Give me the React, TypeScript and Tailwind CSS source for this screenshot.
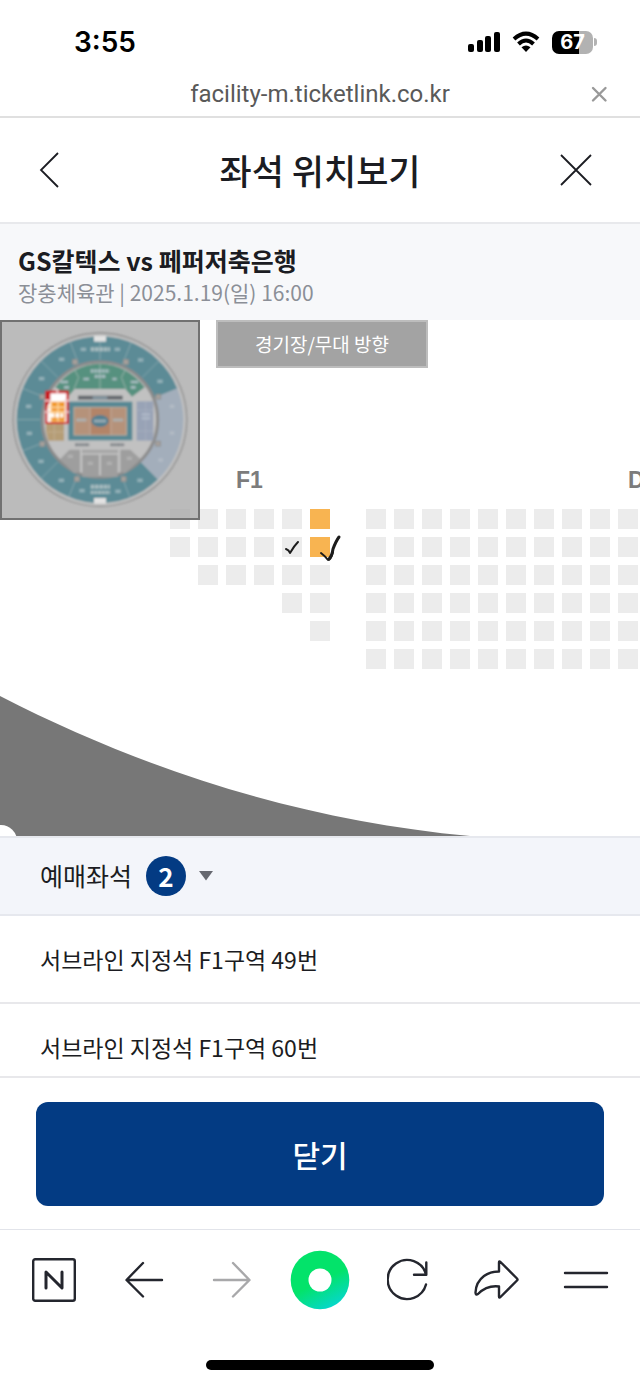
import React from "react";

const INK = "#24262e";

const polar = (r: number, deg: number): [number, number] => {
  const a = (deg * Math.PI) / 180;
  return [300 + r * Math.cos(a), 305 + r * Math.sin(a)];
};

const sector = (r0: number, r1: number, from: number, to: number) => {
  const [ax, ay] = polar(r1, from);
  const [bx, by] = polar(r1, to);
  const [cx, cy] = polar(r0, to);
  const [dx, dy] = polar(r0, from);
  const large = to - from > 180 ? 1 : 0;
  return `M${ax} ${ay}A${r1} ${r1} 0 ${large} 1 ${bx} ${by}L${cx} ${cy}A${r0} ${r0} 0 ${large} 0 ${dx} ${dy}Z`;
};

const spokes = [-111, -135, -158, 180, 158, 135, 112, 69, -90, -68, -45];
const blockMarks = [
  [185, 124], [125, 182], [86, 265], [88, 346], [123, 430], [184, 487],
  [420, 487], [422, 126], [480, 190], [250, 94], [352, 94], [246, 518],
  [354, 520],
];

function MiniMap() {
  return (
    <svg viewBox="6 12 588 588" className="block size-full" role="img" aria-label="경기장 전체 배치도">
      <defs>
        <filter id="soft" x="-5%" y="-5%" width="110%" height="110%">
          <feGaussianBlur stdDeviation="2.5" />
        </filter>
      </defs>
      <g filter="url(#soft)">
        <circle cx="300" cy="305" r="260" fill="#c0c0c0" stroke="#8d8d8d" strokeWidth="4" />
        <path d={sector(172, 250, 46, 338)} fill="#5c8b96" />
        <path d={sector(176, 250, -22, 46)} fill="#a3aebb" />
        <circle cx="300" cy="305" r="173" fill="#c1c1c1" stroke="#8b8b8b" strokeWidth="9" />
        <g stroke="#86a5ad" strokeWidth="3">
          {spokes.map((a) => {
            const [x1, y1] = polar(180, a);
            const [x2, y2] = polar(250, a);
            return <line key={a} x1={x1} y1={y1} x2={x2} y2={y2} />;
          })}
        </g>
        <path d="M166 208Q216 140 300 137Q384 140 434 208L396 236L376 213H224L204 236Z" fill="#57917f" />
        <path d="M222 152L236 178L222 213M378 152L364 178L378 213M300 137V213" stroke="#95b3a9" strokeWidth="3" fill="none" />
        <rect x="282" y="54" width="36" height="17" fill="#e2e2e2" />
        <rect x="282" y="540" width="36" height="17" fill="#e2e2e2" />
        {[[225, 132], [378, 132], [127, 236], [475, 236], [127, 378], [474, 377], [231, 483], [371, 483]].map(([x, y]) => (
          <rect key={`${x}-${y}`} x={x - 7} y={y - 7} width="14" height="14" fill="#a8a29c" stroke="#8f8f8f" strokeWidth="3" />
        ))}
        <rect x="234" y="233" width="134" height="12" fill="#63686d" />
        <rect x="278" y="235" width="44" height="9" fill="#8598a3" />
        <rect x="205" y="251" width="192" height="116" fill="#568894" />
        <rect x="222" y="268" width="157" height="83" fill="#b5927a" stroke="#bfae9f" strokeWidth="3" />
        <rect x="272" y="270" width="59" height="79" fill="#b38467" />
        <path d="M270 268V351M333 268V351" stroke="#bfa898" strokeWidth="3" />
        <ellipse cx="300" cy="309" rx="26" ry="18" fill="#527f91" />
        <path d="M283 309H318M230 306H260M340 306H370" stroke="#aab7bc" strokeWidth="9" strokeDasharray="7 2" />
        <rect x="410" y="250" width="50" height="118" fill="#98a3b6" />
        <path d="M437 250V368M410 276H460M410 339H460" stroke="#a5adbd" strokeWidth="3" />
        <path d="M425 289H450M425 301H450" stroke="#b0bac9" strokeWidth="7" />
        <path d="M160 316H192V368H145L138 340V316Z" fill="#b59d76" />
        <path d="M142 342H192M163 316V368" stroke="#c0ae8e" strokeWidth="3" />
        <path d="M225 380H268M331 380H373" stroke="#82868a" strokeWidth="9" strokeDasharray="9 1" />
        <path d="M180 424L208 395H240V462L222 466ZM247 410H297V477H247ZM303 410H353V477H303ZM361 395H391L422 424L376 466L361 462Z" fill="#9e9e9e" />
        <path d="M246 400H354" stroke="#a5a5a5" strokeWidth="10" />
        <g stroke="#a7bcc0" fill="none">
          <path d="M272 94H330M272 506H330" strokeWidth="12" strokeDasharray="11 2" />
          <path d="M272 523H330M272 159H328M284 175H318" strokeWidth="10" strokeDasharray="9 2" />
          <path d="M181 192H204M192 208H207M392 192H415M392 208H407M250 183H267M337 183H350" strokeWidth="8" />
        </g>
        {blockMarks.map(([x, y]) => (
          <rect key={`${x}-${y}`} x={x - 8} y={y - 5} width="16" height="10" fill="#93b0b8" />
        ))}
        {[[482, 426], [516, 265], [516, 345]].map(([x, y]) => (
          <rect key={`${x}-${y}`} x={x - 7} y={y - 5} width="14" height="10" fill="#b2bbc5" />
        ))}
        {[[211, 415], [271, 436], [328, 436], [388, 421]].map(([x, y]) => (
          <rect key={`${x}-${y}`} x={x - 8} y={y - 5} width="16" height="10" fill="#b0b0b0" />
        ))}
        <rect x="137" y="219" width="68" height="98" fill="#c4141c" />
        <path d="M151 226H200V314H141V268L151 248Z" fill="#fff" />
        <rect x="153" y="251" width="42" height="60" fill="#f19a2c" />
        <path d="M140 268H202M140 282H202M153 251V311M174 251V311" stroke="#ffd9a3" strokeWidth="4" />
        <path d="M151 292H190" stroke="#fff" strokeWidth="13" strokeDasharray="12 3" />
        <rect x="139" y="221" width="64" height="94" fill="none" stroke="#d01b20" strokeWidth="6" />
        <path d="M134 248H150M134 282H150M192 248H208M192 282H208M172 214V228" stroke="#f3d6d6" strokeWidth="5" />
      </g>
    </svg>
  );
}

const leftRows = [
  { from: 0, to: 5 },
  { from: 0, to: 5 },
  { from: 1, to: 5 },
  { from: 4, to: 5 },
  { from: 5, to: 5 },
];
const booked = new Set(["0-5", "1-5"]);
const STEP = 28;

function SeatMap() {
  return (
    <svg className="block h-[516px] w-full" viewBox="0 0 640 516" preserveAspectRatio="xMinYMin slice" role="img" aria-label="좌석 배치도">
      {leftRows.map(({ from, to }, row) =>
        Array.from({ length: to - from + 1 }, (_, i) => from + i).map((col) => (
          <rect
            key={`l${row}-${col}`}
            x={170 + col * STEP}
            y={189 + row * STEP}
            width="20"
            height="20"
            fill={booked.has(`${row}-${col}`) ? "#f8b451" : "#ececec"}
          />
        )),
      )}
      {Array.from({ length: 60 }, (_, i) => (
        <rect key={`r${i}`} x={366 + (i % 10) * STEP} y={189 + Math.floor(i / 10) * STEP} width="20" height="20" fill="#ececec" />
      ))}
      <g fill="#7c7c7c" fontFamily="'Liberation Sans', sans-serif" fontWeight="700" fontSize="23">
        <text x="236" y="168">F1</text>
        <text x="628" y="168">D</text>
      </g>
      <path d="M0 376C142 449 298 500 470 516H0Z" fill="#777" />
      <circle cx="1" cy="521" r="16" fill="#fff" />
      <g fill="none" stroke="#1c1c1c" strokeLinecap="round" strokeLinejoin="round">
        <path d="M286 229Q289 230 290 233Q294 226 298 222" strokeWidth="2" />
        <path d="M321 233Q325 236 328 240Q331 240 333 232" strokeWidth="2" />
        <path d="M329 239Q332 236 333 229Q336 221 339 217" strokeWidth="3" />
      </g>
    </svg>
  );
}

function StatusBar() {
  return (
    <div className="flex h-[72px] items-center justify-between pt-3 pr-[43px] pl-[74px]">
      <time className="font-['Inter',sans-serif] text-[28px] leading-8 font-semibold text-black">3:55</time>
      <div className="flex items-center gap-3">
        <svg width="32" height="22" viewBox="0 0 32 22" aria-hidden="true">
          <rect x="0" y="13" width="6" height="8" rx="2" />
          <rect x="9" y="9" width="6" height="12" rx="2" />
          <rect x="17" y="5" width="6" height="16" rx="2" />
          <rect x="26" y="1" width="6" height="20" rx="2" />
        </svg>
        <svg width="28" height="22" viewBox="0 0 28 22" fill="none" stroke="#000" strokeWidth="4" aria-hidden="true">
          <path d="M2 8Q14 -2.6 26 8" />
          <path d="M6.5 13Q14 6 21.500 13" />
          <path d="M14 21L9.500 16.300Q14 12.800 18.500 16.300Z" fill="#000" stroke="none" />
        </svg>
        <div className="flex items-center gap-px">
          <div className="flex h-[23px] w-[41px] items-center justify-center rounded-[7px] bg-linear-to-r from-black from-67% to-[#b2b2b2] to-67% font-['Inter',sans-serif] text-xl leading-none font-bold text-white">
            67
          </div>
          <span className="h-2 w-[3px] rounded-r-full bg-[#b2b2b2]" />
        </div>
      </div>
    </div>
  );
}

const navButton = "flex size-16 items-center justify-center";

function BrowserNav() {
  const line = { fill: "none", stroke: INK, strokeWidth: 2.4, strokeLinecap: "round" as const, strokeLinejoin: "round" as const };
  return (
    <nav className="flex items-center justify-between border-t border-[#e2e4ea] px-[22px] pt-[18px]">
      <button className={navButton} aria-label="네이버 홈">
        <svg width="44" height="44" viewBox="0 0 44 44" {...line}>
          <rect x="1.200" y="1.200" width="41.600" height="41.600" rx="2" />
          <path d="M14 30V14L30 30V14" strokeWidth="3" />
        </svg>
      </button>
      <button className={navButton} aria-label="이전">
        <svg width="44" height="44" viewBox="0 0 44 44" {...line}>
          <path d="M41 22H6M22 5L5.500 22L22 38.500" />
        </svg>
      </button>
      <button className={navButton} aria-label="다음" disabled>
        <svg width="44" height="44" viewBox="0 0 44 44" {...line} stroke="#a8a8aa">
          <path d="M5 22H40M24 5L40.500 22L24 38.500" />
        </svg>
      </button>
      <button className={navButton} aria-label="그린닷">
        <svg width="60" height="60" viewBox="0 0 60 60">
          <defs>
            <linearGradient id="dot" x1="0.3" y1="0" x2="0.8" y2="1">
              <stop offset="0.5" stopColor="#03e36a" />
              <stop offset="1" stopColor="#06d5da" />
            </linearGradient>
          </defs>
          <circle cx="30" cy="30" r="29.300" fill="url(#dot)" />
          <circle cx="30" cy="30" r="11.500" fill="#fff" />
        </svg>
      </button>
      <button className={navButton} aria-label="새로고침">
        <svg width="44" height="44" viewBox="0 0 44 44" {...line}>
          <path d="M39 26.500A19.500 19.500 0 1 1 39 16.500M39.300 4.500V16.700H27" />
        </svg>
      </button>
      <button className={navButton} aria-label="공유">
        <svg width="46" height="44" viewBox="0 0 46 44" {...line}>
          <path d="M25 4.500Q25 2.500 26.500 4L43 20.500Q44 21.500 43 22.500L26.500 39Q25 40.500 25 38.500V28.500Q13 27 4 36Q1.500 37.500 1.500 34.500Q2 24 10 18Q16 13.500 25 13.500Z" />
        </svg>
      </button>
      <button className={navButton} aria-label="메뉴">
        <svg width="46" height="44" viewBox="0 0 46 44" {...line}>
          <path d="M2 15H44M2 29H44" />
        </svg>
      </button>
    </nav>
  );
}

const seats = ["서브라인 지정석 F1구역 49번", "서브라인 지정석 F1구역 60번"];

export default function App() {
  return (
    <div className="w-full overflow-hidden bg-white font-['Noto_Sans_CJK_KR',sans-serif] text-[#1b1c22]">
      <StatusBar />
      <div className="grid h-[46px] grid-cols-[1fr_auto_1fr] items-center border-b-2 border-[#e0e0e0] px-8">
        <span className="col-start-2 font-['Roboto',sans-serif] text-2xl leading-7 text-[#595959]">facility-m.ticketlink.co.kr</span>
        <button className="justify-self-end" aria-label="페이지 닫기">
          <svg width="18" height="18" viewBox="0 0 18 18" stroke="#999" strokeWidth="2.400" strokeLinecap="round">
            <path d="M3 3L15.500 15.500M15.500 3L3 15.500" />
          </svg>
        </button>
      </div>

      <header className="grid h-[106px] grid-cols-[1fr_auto_1fr] items-center border-b-2 border-[#e8e9ec] pr-11 pl-9">
        <button className="justify-self-start" aria-label="뒤로">
          <svg width="32" height="40" viewBox="0 0 32 40" fill="none" stroke="#1b1c22" strokeWidth="1.800">
            <path d="M22 3L5 20L22 37" />
          </svg>
        </button>
        <h1 className="pl-2 text-[35px] leading-10 font-medium">좌석 위치보기</h1>
        <button className="justify-self-end" aria-label="닫기">
          <svg width="40" height="40" viewBox="0 0 40 40" stroke="#1b1c22" strokeWidth="1.800">
            <path d="M5 5L35 35M35 5L5 35" />
          </svg>
        </button>
      </header>

      <section className="h-24 bg-[#f7f8fa] px-[18px] pt-5">
        <h2 className="text-[25px] leading-8 font-bold">GS칼텍스 vs 페퍼저축은행</h2>
        <p className="text-[21px] leading-8 text-[#8b8f97]">장충체육관 | 2025.1.19(일) 16:00</p>
      </section>

      <main>
        <div className="relative overflow-hidden">
          <SeatMap />
          <div className="absolute top-0 left-0 size-[200px] border-2 border-[#717171] bg-[#aaa]/80">
            <MiniMap />
          </div>
          <div className="absolute top-0 left-[216px] flex h-12 w-[212px] items-center justify-center border-2 border-[#bdbdbd] bg-[#a3a3a3] text-[19px] text-white">
            경기장/무대 방향
          </div>
        </div>

        <button className="flex h-20 w-full items-center border-y-2 border-[#e6e8ee] bg-[#f3f5fa] px-10 text-left text-[25px]">
          예매좌석
          <span className="ml-[14px] flex size-10 items-center justify-center rounded-full bg-[#033b83] text-[26px] leading-10 font-bold text-white">2</span>
          <svg className="ml-3" width="16" height="10" viewBox="0 0 16 10" aria-hidden="true">
            <path d="M1 0H15L8 9.500Z" fill="#666870" />
          </svg>
        </button>
        <ul className="h-[162px] overflow-hidden border-b-2 border-[#e8e8eb]">
          {seats.map((seat) => (
            <li key={seat} className="flex h-[88px] items-center border-b-2 border-[#e8e8eb] px-10 text-[23px]">
              {seat}
            </li>
          ))}
        </ul>
        <div className="px-9 pt-6 pb-[23px]">
          <button className="h-[104px] w-full rounded-xl bg-[#033b83] text-[30px] font-medium text-white">닫기</button>
        </div>
      </main>

      <BrowserNav />
      <div className="flex justify-center pt-12 pb-4">
        <div className="h-[10px] w-[228px] rounded-full bg-black" />
      </div>
    </div>
  );
}
